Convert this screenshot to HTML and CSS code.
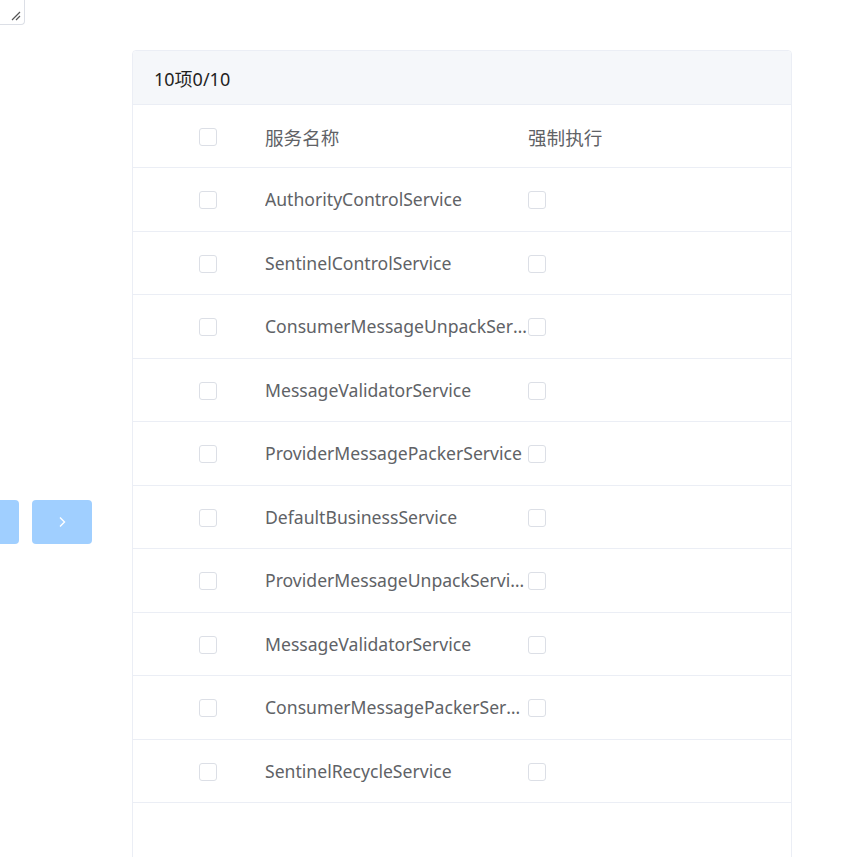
FILE: index.html
```html
<!DOCTYPE html>
<html lang="zh">
<head>
<meta charset="utf-8">
<link rel="stylesheet" href="styles.css">
</head>
<body>
<div class="resizer">
  <svg class="grip" width="10" height="10" viewBox="0 0 10 10"><path d="M9 1 L1 9 M9 5 L5 9" stroke="#555" stroke-width="1.2" fill="none"/></svg>
</div>
<div class="transfer">
  <div class="buttons">
    <button class="btn"></button>
    <button class="btn">
      <svg width="8" height="12" viewBox="0 0 8 12"><path d="M2 1.5 L6.5 6 L2 10.5" stroke="#fff" stroke-width="1.4" fill="none"/></svg>
    </button>
  </div>
  <div class="panel">
    <div class="panel-head">10项0/10</div>
    <div class="row head-row">
      <div class="c-check"><span class="cb"></span></div>
      <div class="c-name">服务名称</div>
      <div class="c-force">强制执行</div>
    </div>
    <div class="row"><div class="c-check"><span class="cb"></span></div><div class="c-name">AuthorityControlService</div><div class="c-force"><span class="cb"></span></div></div>
    <div class="row"><div class="c-check"><span class="cb"></span></div><div class="c-name">SentinelControlService</div><div class="c-force"><span class="cb"></span></div></div>
    <div class="row"><div class="c-check"><span class="cb"></span></div><div class="c-name">ConsumerMessageUnpackService</div><div class="c-force"><span class="cb"></span></div></div>
    <div class="row"><div class="c-check"><span class="cb"></span></div><div class="c-name">MessageValidatorService</div><div class="c-force"><span class="cb"></span></div></div>
    <div class="row"><div class="c-check"><span class="cb"></span></div><div class="c-name">ProviderMessagePackerService</div><div class="c-force"><span class="cb"></span></div></div>
    <div class="row"><div class="c-check"><span class="cb"></span></div><div class="c-name">DefaultBusinessService</div><div class="c-force"><span class="cb"></span></div></div>
    <div class="row"><div class="c-check"><span class="cb"></span></div><div class="c-name">ProviderMessageUnpackService</div><div class="c-force"><span class="cb"></span></div></div>
    <div class="row"><div class="c-check"><span class="cb"></span></div><div class="c-name">MessageValidatorService</div><div class="c-force"><span class="cb"></span></div></div>
    <div class="row"><div class="c-check"><span class="cb"></span></div><div class="c-name">ConsumerMessagePackerService</div><div class="c-force"><span class="cb"></span></div></div>
    <div class="row"><div class="c-check"><span class="cb"></span></div><div class="c-name">SentinelRecycleService</div><div class="c-force"><span class="cb"></span></div></div>
  </div>
</div>
</body>
</html>
```
FILE: styles.css
```css
html, body {
  margin: 0;
  padding: 0;
  background: #fff;
  font-family: "Noto Sans", "Noto Sans CJK SC", sans-serif;
  overflow: hidden;
}
.resizer {
  width: 24px;
  height: 24px;
  border-right: 1px solid #dcdfe6;
  border-bottom: 1px solid #dcdfe6;
  border-bottom-right-radius: 4px;
  position: relative;
  box-sizing: content-box;
}
.grip {
  position: absolute;
  right: 3px;
  bottom: 3px;
}
.transfer {
  display: flex;
  align-items: center;
  margin-top: 25px;
}
.buttons {
  display: flex;
  gap: 13px;
  margin-left: -41px;
  margin-right: 40px;
}
.btn {
  width: 60px;
  height: 44px;
  border: none;
  border-radius: 4px;
  background: #a0cfff;
  display: flex;
  align-items: center;
  justify-content: center;
  padding: 0;
}
.panel {
  width: 660px;
  height: 944px;
  border: 1px solid #ebeef5;
  border-radius: 4px;
  box-sizing: border-box;
  flex: none;
}
.panel-head {
  height: 53px;
  background: #f5f7fa;
  border-bottom: 1px solid #ebeef5;
  border-radius: 4px 4px 0 0;
  display: flex;
  align-items: center;
  padding-left: 21px;
  font-size: 18px;
  color: #1f1f1f;
}
.row {
  height: 63.5px;
  box-sizing: border-box;
  border-bottom: 1px solid #ebeef5;
  display: flex;
  align-items: center;
  color: #606266;
  font-size: 17.6px;
}
.head-row {
  font-size: 18.6px;
  height: 63px;
}
.c-check {
  width: 66px;
  padding-left: 66px;
  flex: none;
  display: flex;
}
.c-name {
  width: 263px;
  flex: none;
  white-space: nowrap;
  overflow: hidden;
  text-overflow: ellipsis;
}
.c-force {
  display: flex;
}
.cb {
  display: block;
  width: 18px;
  height: 18px;
  margin-top: 2px;
  box-sizing: border-box;
  border: 1px solid #dcdfe6;
  border-radius: 3px;
  background: #fff;
}
```
